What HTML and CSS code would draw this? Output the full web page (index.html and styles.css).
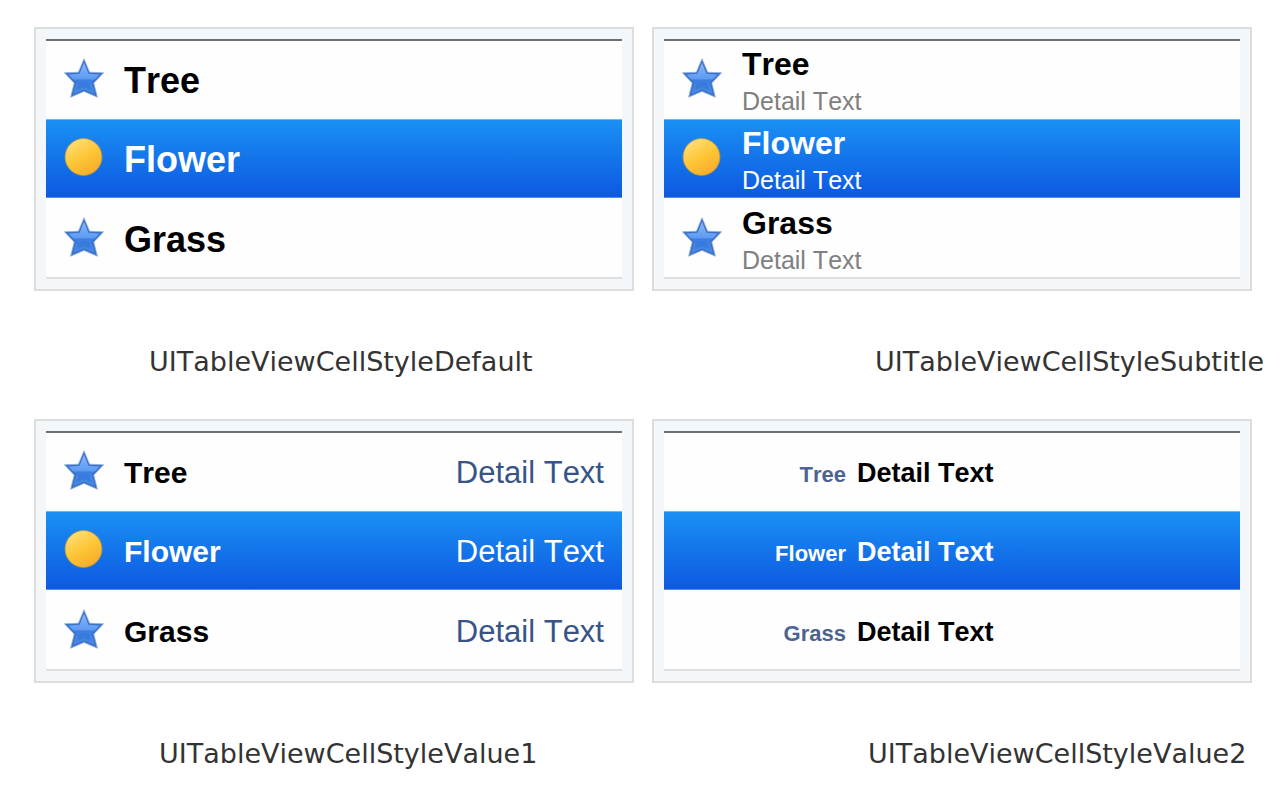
FILE: index.html
```html
<!DOCTYPE html>
<html lang="en">
<head>
<meta charset="utf-8">
<title>UITableViewCell styles</title>
<link rel="stylesheet" href="styles.css">
</head>
<body>
<svg class="defs" width="0" height="0" aria-hidden="true">
  <defs>
    <linearGradient id="starFill" x1="0" y1="0" x2="0" y2="1">
      <stop offset="0" stop-color="#86b6fa"/>
      <stop offset="0.5" stop-color="#609cf2"/>
      <stop offset="0.56" stop-color="#3b7de0"/>
      <stop offset="1" stop-color="#4a8ae6"/>
    </linearGradient>
    <linearGradient id="discFill" x1="0.2" y1="0" x2="0.8" y2="1">
      <stop offset="0" stop-color="#ffe07e"/>
      <stop offset="0.5" stop-color="#fdc636"/>
      <stop offset="1" stop-color="#f7a928"/>
    </linearGradient>
    <symbol id="star" viewBox="0 0 40 40">
      <path d="M20 0.8 L25.6 14.2 L39.6 14.8 L29.8 25 L33.4 39.2 L20 33.4 L6.6 39.2 L10.2 25 L0.4 14.8 L14.4 14.2 Z" fill="#3a70c6" stroke="#8fb0e0" stroke-width="0.8"/>
      <path d="M20 4.8 L24.4 15.8 L35.6 16.6 L27.8 24.6 L30.8 36 L20 31.4 L9.2 36 L12.2 24.6 L4.4 16.6 L15.6 15.8 Z" fill="url(#starFill)"/>
      <path d="M12.5 32.2 L14.8 25.5 Q20 23 25.2 25.5 L27.5 32.2 L20 29 Z" fill="#2e6fd6" opacity="0.4"/>
    </symbol>
    <symbol id="disc" viewBox="0 0 40 40">
      <circle cx="19.5" cy="20" r="18.5" fill="url(#discFill)" stroke="#a99250" stroke-width="0.8"/>
    </symbol>
  </defs>
</svg>
<main class="gallery">
  <figure class="example">
    <div class="panel">
      <ul class="cells cells-default">
        <li class="cell"><svg class="icon"><use href="#star"/></svg><span class="title">Tree</span></li>
        <li class="cell selected"><svg class="icon"><use href="#disc"/></svg><span class="title">Flower</span></li>
        <li class="cell"><svg class="icon"><use href="#star"/></svg><span class="title">Grass</span></li>
      </ul>
    </div>
    <figcaption class="caption caption-default">UITableViewCellStyleDefault</figcaption>
  </figure>
  <figure class="example">
    <div class="panel">
      <ul class="cells cells-subtitle">
        <li class="cell"><svg class="icon"><use href="#star"/></svg><div class="stack"><span class="title">Tree</span><span class="detail">Detail Text</span></div></li>
        <li class="cell selected"><svg class="icon"><use href="#disc"/></svg><div class="stack"><span class="title">Flower</span><span class="detail">Detail Text</span></div></li>
        <li class="cell"><svg class="icon"><use href="#star"/></svg><div class="stack"><span class="title">Grass</span><span class="detail">Detail Text</span></div></li>
      </ul>
    </div>
    <figcaption class="caption caption-subtitle">UITableViewCellStyleSubtitle</figcaption>
  </figure>
  <figure class="example">
    <div class="panel">
      <ul class="cells cells-value1">
        <li class="cell"><svg class="icon"><use href="#star"/></svg><span class="title">Tree</span><span class="detail">Detail Text</span></li>
        <li class="cell selected"><svg class="icon"><use href="#disc"/></svg><span class="title">Flower</span><span class="detail">Detail Text</span></li>
        <li class="cell"><svg class="icon"><use href="#star"/></svg><span class="title">Grass</span><span class="detail">Detail Text</span></li>
      </ul>
    </div>
    <figcaption class="caption caption-value1">UITableViewCellStyleValue1</figcaption>
  </figure>
  <figure class="example">
    <div class="panel">
      <ul class="cells cells-value2">
        <li class="cell"><span class="title">Tree</span><span class="detail">Detail Text</span></li>
        <li class="cell selected"><span class="title">Flower</span><span class="detail">Detail Text</span></li>
        <li class="cell"><span class="title">Grass</span><span class="detail">Detail Text</span></li>
      </ul>
    </div>
    <figcaption class="caption caption-value2">UITableViewCellStyleValue2</figcaption>
  </figure>
</main>
</body>
</html>
```
FILE: styles.css
```css
* {
  box-sizing: border-box;
}

body {
  margin: 0;
  background: #fff;
  color: #000;
  font-family: "Liberation Sans", Arial, sans-serif;
  font-kerning: none;
}

.defs {
  position: absolute;
}

.gallery {
  display: grid;
  grid-template-columns: repeat(2, minmax(0, 1fr));
  gap: 40px 18px;
  padding: 27px 36px 0 34px;
}

.example {
  margin: 0;
}

.panel {
  padding: 10px;
  border: 2px solid #dcdddd;
  background: #f3f7fa;
}

.cells {
  margin: 0;
  padding: 0;
  list-style: none;
  background: #fefefe;
  border-top: 2px solid #6b7075;
  border-bottom: 2px solid #dddfe0;
}

.cell {
  display: flex;
  align-items: center;
  gap: 20px;
  height: 79px;
  padding: 2px 18px 0;
}

.cell:first-child {
  height: 78px;
}

.cell:last-child {
  padding-top: 4px;
}

.selected {
  background: linear-gradient(#1a90f4, #0d59e1);
  border-top: 1px solid #7fb4d8;
  border-bottom: 1px solid #5c8be2;
  color: #fff;
}

.icon {
  flex: none;
  width: 40px;
  height: 40px;
  margin-bottom: 6px;
}

.title {
  font-weight: bold;
}

.cells-default .title {
  font-size: 36px;
}

.stack {
  display: flex;
  flex-direction: column;
}

.cells-subtitle .title {
  font-size: 32px;
  line-height: 40px;
}

.cells-subtitle .detail {
  font-size: 25px;
  line-height: 34px;
  color: #808080;
}

.cells-value1 .title {
  font-size: 30px;
}

.cells-value1 .detail {
  margin-left: auto;
  font-size: 31px;
  color: #385487;
}

.cells-value2 .cell {
  align-items: baseline;
  gap: 11px;
  padding-top: 23px;
}

.cells-value2 .cell:last-child {
  padding-top: 25px;
}

.cells-value2 .title {
  width: 164px;
  font-size: 22px;
  text-align: right;
  color: #4d6391;
}

.cells-value2 .detail {
  font-size: 27px;
  line-height: 34px;
  font-weight: bold;
}

.cells .selected .title,
.cells .selected .detail {
  color: #fff;
}

.caption {
  margin-top: 54px;
  color: #333;
  font-family: Verdana, "DejaVu Sans", sans-serif;
  font-size: 27px;
  line-height: 34px;
  white-space: nowrap;
}

.caption-default {
  padding-left: 115px;
}

.caption-subtitle {
  padding-left: 223px;
}

.caption-value1 {
  padding-left: 125px;
}

.caption-value2 {
  padding-left: 216px;
}
```
